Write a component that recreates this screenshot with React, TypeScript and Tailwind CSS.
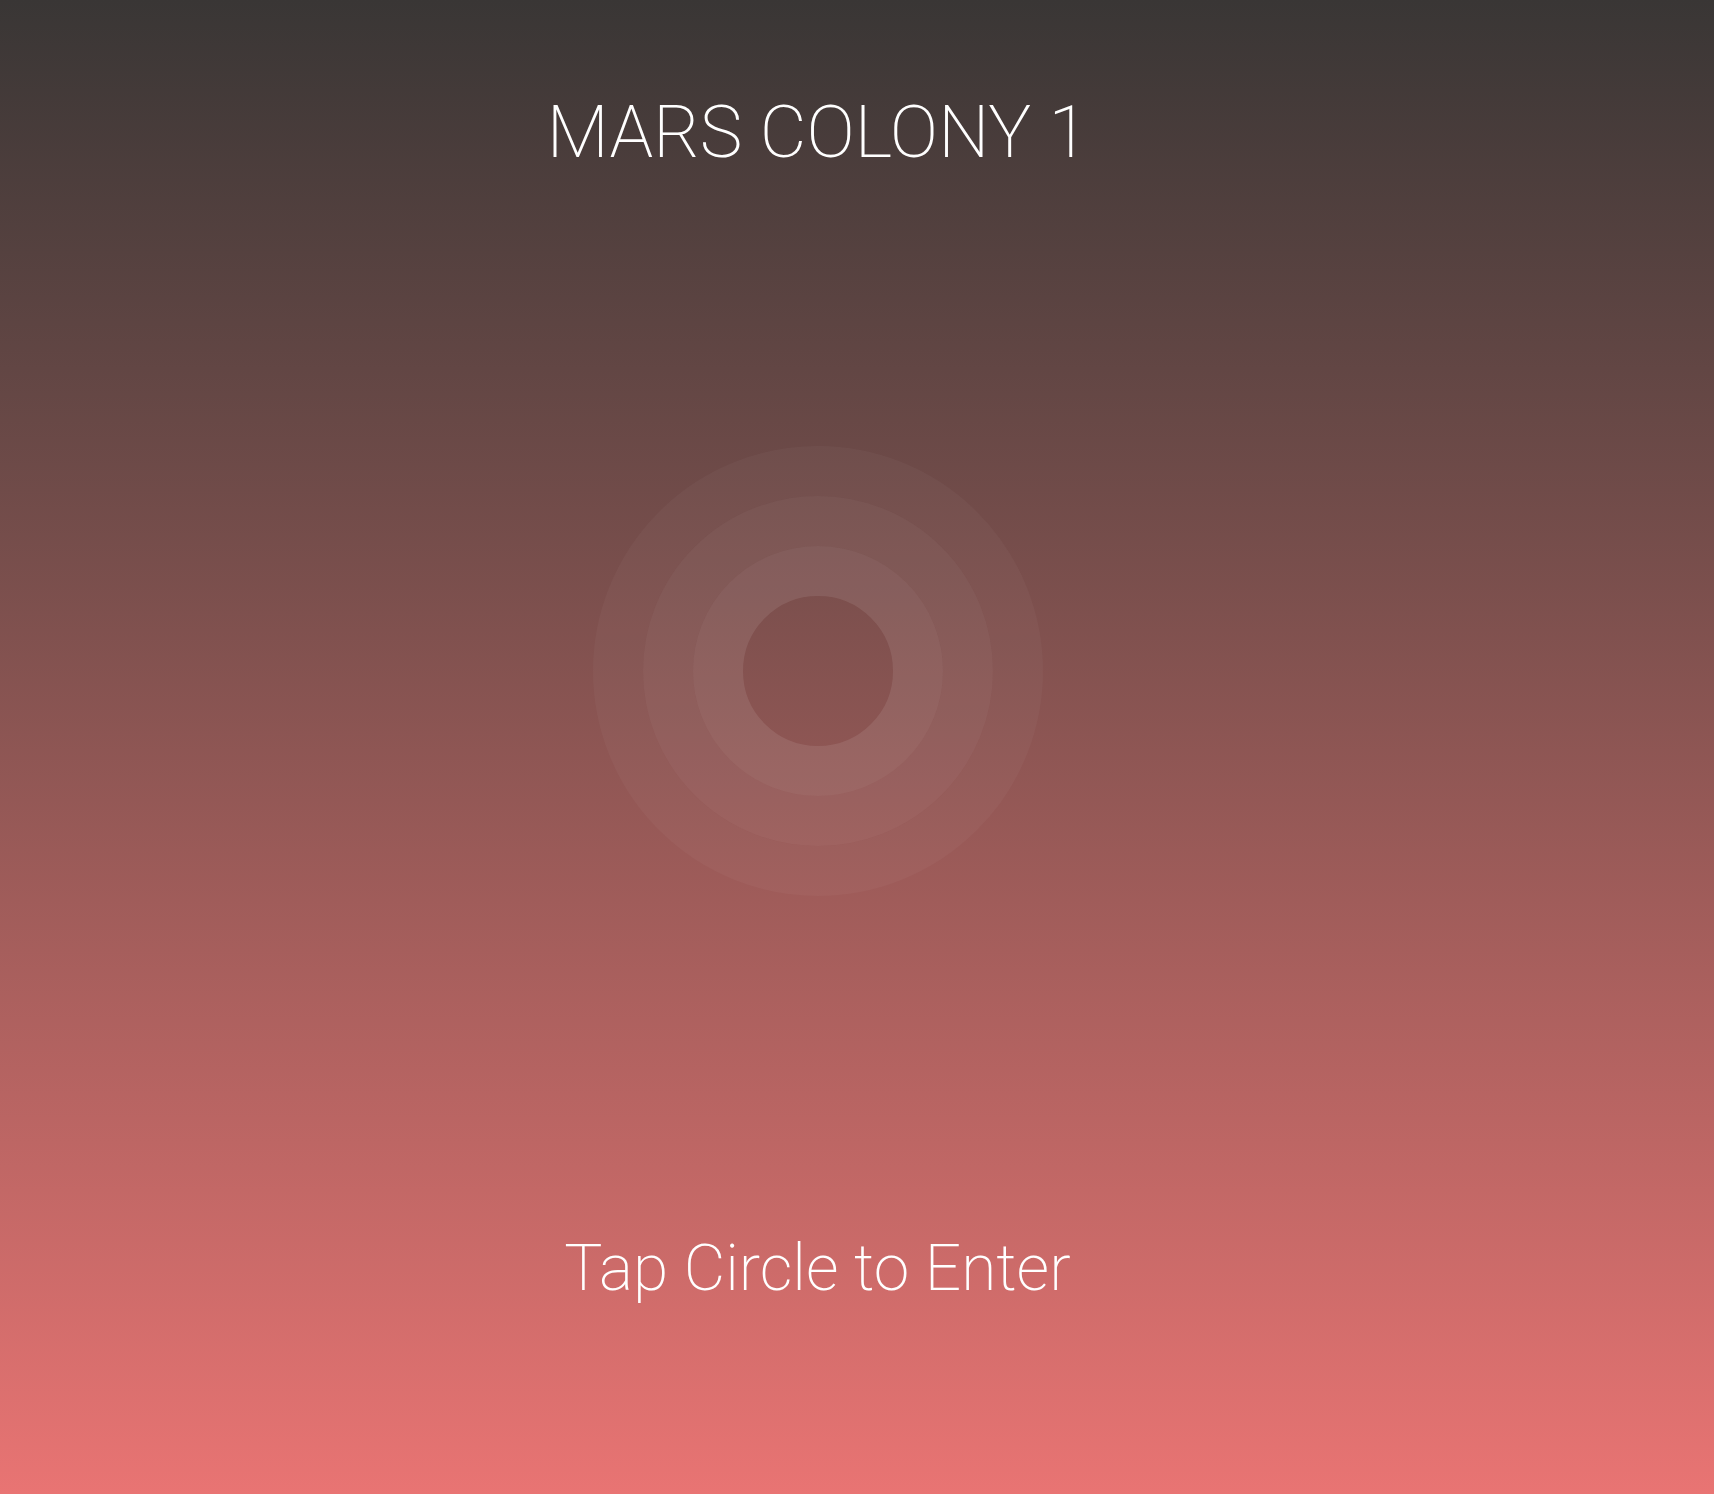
import React from "react";

export default function App() {
  return (
    <div
      className="w-full min-h-[1494px] flex flex-col bg-gradient-to-b from-[#393635] to-[#e97473] text-white"
      style={{ fontFamily: "Roboto, 'Noto Sans', sans-serif" }}
    >
      <div className="w-[1635px] flex flex-col items-center">
        <h1 className="mt-[97px] text-[72px] leading-none font-extralight">
          MARS COLONY 1
        </h1>
        <button
          type="button"
          className="mt-[277px] w-[450px] h-[450px] rounded-full border-[50px] border-white/[0.03] flex items-center justify-center"
        >
          <div className="w-[350px] h-[350px] rounded-full border-[50px] border-white/[0.06] flex items-center justify-center">
            <div className="w-[250px] h-[250px] rounded-full border-[50px] border-white/[0.09]" />
          </div>
        </button>
        <p className="mt-[341px] text-[64px] leading-none font-extralight">
          Tap Circle to Enter
        </p>
      </div>
    </div>
  );
}
